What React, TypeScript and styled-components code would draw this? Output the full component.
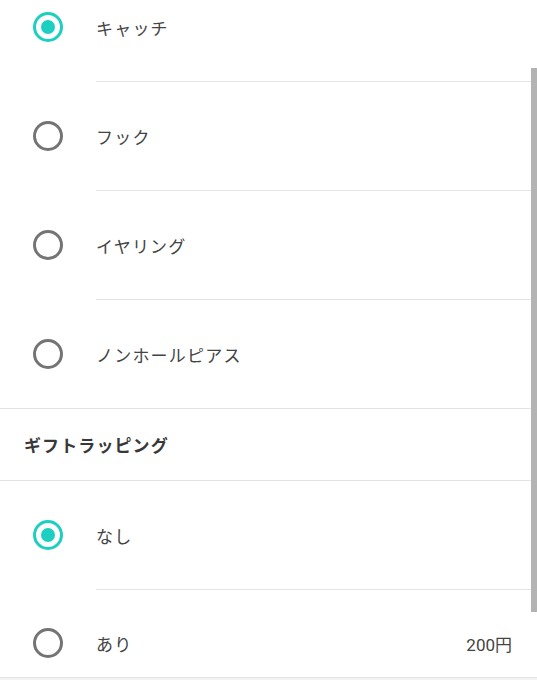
import React from "react";
import styled, { createGlobalStyle } from "styled-components";

const GlobalStyle = createGlobalStyle`
  html, body {
    margin: 0;
    padding: 0;
    background: #ffffff;
    overflow: hidden;
  }
  body {
    font-family: "Noto Sans CJK JP", "Noto Sans", sans-serif;
  }
`;

type Option = { label: string; checked?: boolean; price?: string };

const earringOptions: Option[] = [
  { label: "キャッチ", checked: true },
  { label: "フック" },
  { label: "イヤリング" },
  { label: "ノンホールピアス" },
];

const wrappingOptions: Option[] = [
  { label: "なし", checked: true },
  { label: "あり", price: "200円" },
];

const App: React.FC = () => {
  return (
    <Page>
      <GlobalStyle />
      <List>
        {earringOptions.map((o, i) => (
          <React.Fragment key={o.label}>
            <Row>
              <Radio $checked={!!o.checked} />
              <Label>{o.label}</Label>
            </Row>
            <Divider $full={i === earringOptions.length - 1} />
          </React.Fragment>
        ))}
        <SectionHeader>ギフトラッピング</SectionHeader>
        <Divider $full />
        {wrappingOptions.map((o, i) => {
          const last = i === wrappingOptions.length - 1;
          return (
            <React.Fragment key={o.label}>
              <Row $short={last}>
                <Radio $checked={!!o.checked} />
                <Label>{o.label}</Label>
                {o.price && <Price>{o.price}</Price>}
              </Row>
              <Divider $full={last} />
            </React.Fragment>
          );
        })}
        <Footer />
      </List>
      <Scrollbar />
    </Page>
  );
};

export default App;

const Page = styled.div`
  position: relative;
  width: 537px;
  height: 680px;
  overflow: hidden;
  background: #ffffff;
`;

const List = styled.div`
  display: flex;
  flex-direction: column;
  margin-top: -27px;
`;

const Row = styled.div<{ $short?: boolean }>`
  box-sizing: border-box;
  height: ${(p) => (p.$short ? "87px" : "108px")};
  padding: ${(p) => (p.$short ? "19px 25px 0 33px" : "0 25px 0 33px")};
  display: flex;
  align-items: center;
`;

const Radio = styled.span<{ $checked: boolean }>`
  box-sizing: border-box;
  flex: none;
  width: 30px;
  height: 30px;
  border-radius: 50%;
  border: 3px solid ${(p) => (p.$checked ? "#1ccfc0" : "#747474")};
  display: flex;
  align-items: center;
  justify-content: center;

  &::before {
    content: "";
    width: 14px;
    height: 14px;
    border-radius: 50%;
    background: ${(p) => (p.$checked ? "#1ccfc0" : "transparent")};
  }
`;

const Label = styled.span`
  margin-left: 33px;
  font-size: 17px;
  color: #444444;
  letter-spacing: 1.2px;
`;

const Price = styled.span`
  margin-left: auto;
  font-family: "Roboto", "Noto Sans CJK JP", sans-serif;
  font-size: 17px;
  color: #444444;
`;

const Divider = styled.div<{ $full?: boolean }>`
  height: 1px;
  background: #e4e4e4;
  margin-left: ${(p) => (p.$full ? "0" : "96px")};
`;

const SectionHeader = styled.div`
  box-sizing: border-box;
  height: 71px;
  padding-left: 24px;
  display: flex;
  align-items: center;
  font-size: 17px;
  font-weight: 600;
  color: #383838;
  letter-spacing: 1.1px;
`;

const Footer = styled.div`
  height: 40px;
  background: #f3f3f3;
`;

const Scrollbar = styled.div`
  position: absolute;
  right: 0;
  top: 68px;
  width: 6px;
  height: 544px;
  background: #b3b3b3;
`;
